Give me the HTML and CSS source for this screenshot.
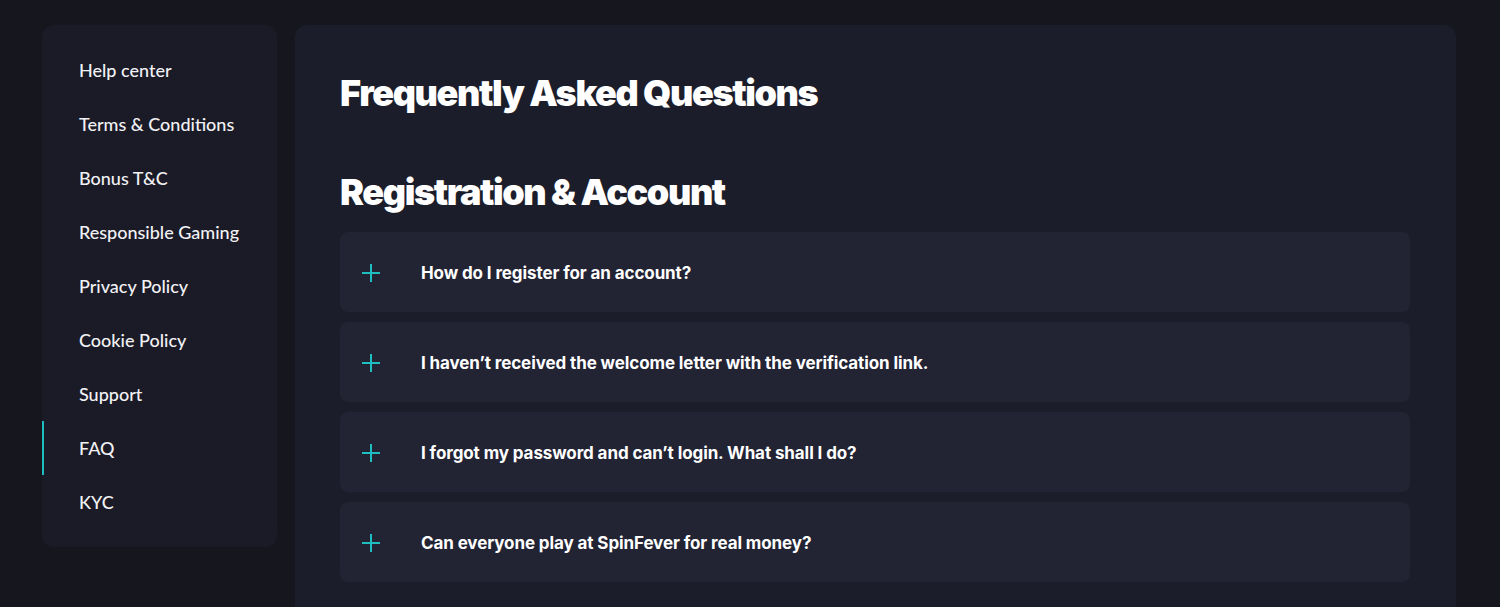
FILE: index.html
```html
<!DOCTYPE html>
<html lang="en">
<head>
    <meta charset="UTF-8">
    <meta name="viewport" content="width=device-width, initial-scale=1.0">
    <title>FAQ - SpinFever</title>
    <link rel="stylesheet" href="styles.css">
</head>
<body>
    <div class="page">
        <nav class="sidebar">
            <a class="side-link" href="#">Help center</a>
            <a class="side-link" href="#">Terms &amp; Conditions</a>
            <a class="side-link" href="#">Bonus T&amp;C</a>
            <a class="side-link" href="#">Responsible Gaming</a>
            <a class="side-link" href="#">Privacy Policy</a>
            <a class="side-link" href="#">Cookie Policy</a>
            <a class="side-link" href="#">Support</a>
            <a class="side-link active" href="#">FAQ</a>
            <a class="side-link" href="#">KYC</a>
        </nav>

        <main class="content">
            <h1>Frequently Asked Questions</h1>
            <h2>Registration &amp; Account</h2>
            <div class="faq-list">
                <div class="faq-item">
                    <svg class="plus" viewBox="0 0 18 18"><path d="M9 0v18M0 9h18"/></svg>
                    <span>How do I register for an account?</span>
                </div>
                <div class="faq-item">
                    <svg class="plus" viewBox="0 0 18 18"><path d="M9 0v18M0 9h18"/></svg>
                    <span>I haven’t received the welcome letter with the verification link.</span>
                </div>
                <div class="faq-item">
                    <svg class="plus" viewBox="0 0 18 18"><path d="M9 0v18M0 9h18"/></svg>
                    <span>I forgot my password and can’t login. What shall I do?</span>
                </div>
                <div class="faq-item">
                    <svg class="plus" viewBox="0 0 18 18"><path d="M9 0v18M0 9h18"/></svg>
                    <span>Can everyone play at SpinFever for real money?</span>
                </div>
            </div>
        </main>
    </div>
</body>
</html>
```

FILE: styles.css
```css
body {
    font-family: Lato, 'Noto Sans', sans-serif;
    background-color: #16161e;
    color: #ffffff;
    margin: 0;
    padding: 0;
    height: 100vh;
    overflow: hidden;
}

.page {
    display: flex;
    align-items: flex-start;
    gap: 18px;
    padding: 25px 0 0 42px;
}

.sidebar {
    width: 235px;
    background-color: #1b1b27;
    border-radius: 12px;
    padding: 18px 0 18px;
    display: flex;
    flex-direction: column;
}

.side-link {
    display: flex;
    align-items: center;
    height: 54px;
    padding-left: 37px;
    color: #f2f2f5;
    text-decoration: none;
    font-size: 18px;
    font-weight: 500;
    position: relative;
}

.side-link.active::before {
    content: '';
    position: absolute;
    left: 0;
    top: 0;
    bottom: 0;
    width: 2px;
    background-color: #1fbfbf;
}

.content {
    width: 1161px;
    height: 600px;
    box-sizing: border-box;
    background-color: #1c1d2a;
    border-radius: 12px 12px 0 0;
    padding: 46px 46px 0 45px;
}

h1,
h2 {
    margin: 0;
    font-family: Inter, sans-serif;
    font-weight: 900;
    font-size: 36px;
    line-height: 44px;
    letter-spacing: -1.4px;
}

h1 {
    margin-bottom: 55px;
}

h2 {
    margin-bottom: 18px;
}

.faq-list {
    display: flex;
    flex-direction: column;
    gap: 10px;
}

.faq-item {
    display: flex;
    align-items: center;
    gap: 41px;
    height: 80px;
    box-sizing: border-box;
    padding: 1px 0 0 22px;
    background-color: #222333;
    border-radius: 8px;
    font-family: Inter, sans-serif;
    font-size: 17px;
    font-weight: 700;
    letter-spacing: -0.1px;
}

.plus {
    width: 18px;
    height: 18px;
    flex-shrink: 0;
    stroke: #1fbfbf;
    stroke-width: 2;
    fill: none;
}
```
